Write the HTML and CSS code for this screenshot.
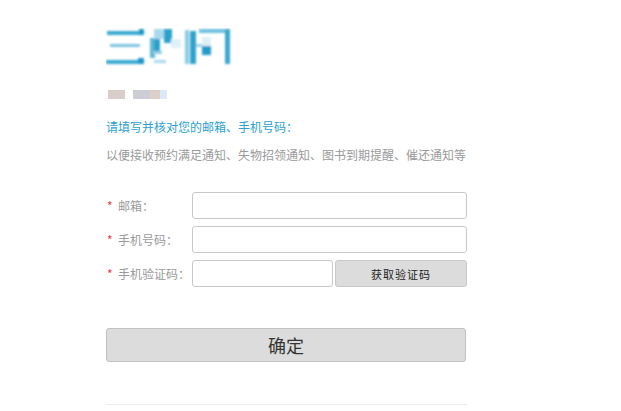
FILE: index.html
```html
<!DOCTYPE html>
<html lang="zh-CN">
<head>
	<meta charset="UTF-8">
<link rel="stylesheet" href="styles.css">
</head>
<body>
<div class="page">
	<div class="logo">
		<svg width="130" height="40" viewBox="0 0 130 40">
			<defs><filter id="bl"><feGaussianBlur stdDeviation="1"/></filter></defs>
			<g filter="url(#bl)">
				<rect x="1" y="3" width="36" height="4" fill="#39a9d0"/>
				<rect x="4" y="16" width="30" height="3" fill="#7cc6e0"/>
				<rect x="0" y="32" width="38" height="4" fill="#39a9d0"/>
				<rect x="33" y="1" width="5" height="6" fill="#1d96c4"/>
				<rect x="32" y="30" width="6" height="6" fill="#1d96c4"/>
				<rect x="44" y="10" width="5" height="20" fill="#5fb8d8"/>
				<rect x="48" y="1" width="10" height="10" fill="#a9d9ec"/>
				<rect x="58" y="1" width="8" height="14" fill="#2aa0cc"/>
				<rect x="48" y="11" width="6" height="12" fill="#2aa0cc"/>
				<rect x="65" y="11" width="10" height="9" fill="#dff1f8"/>
				<rect x="47" y="23" width="9" height="3" fill="#8fcde4"/>
				<rect x="48" y="32" width="12" height="3" fill="#a6d8ea"/>
				<rect x="79" y="2" width="4" height="34" fill="#86cbe3"/>
				<rect x="84" y="3" width="6" height="33" fill="#2ea3cd"/>
				<rect x="93" y="1" width="27" height="4" fill="#6fc0de"/>
				<rect x="96" y="9" width="9" height="9" fill="#dff1f8"/>
				<rect x="96" y="18" width="9" height="9" fill="#229bc9"/>
				<rect x="90" y="16" width="6" height="3" fill="#9bd3e8"/>
				<rect x="119" y="1" width="5" height="35" fill="#3aa7cf"/>
			</g>
		</svg>
	</div>
	<div class="sub">
		<span class="blk b1"></span><span class="blk b2"></span><span class="blk b3"></span><span class="blk b4"></span>
	</div>
	<p class="tip">请填写并核对您的邮箱、手机号码：</p>
	<p class="desc">以便接收预约满足通知、失物招领通知、图书到期提醒、催还通知等</p>

	<div class="form">
		<div class="row">
			<label class="lbl"><i>*</i>邮箱：</label>
			<input type="text" class="ipt">
		</div>
		<div class="row">
			<label class="lbl"><i>*</i>手机号码：</label>
			<input type="text" class="ipt">
		</div>
		<div class="row">
			<label class="lbl"><i>*</i>手机验证码：</label>
			<input type="text" class="ipt code">
			<input type="button" class="getcode" value="获取验证码">
		</div>
	</div>

	<input type="button" class="ok" value="确定">
	<div class="line"></div>
</div>
</body>
</html>
```

FILE: styles.css
```css
*{ margin:0; padding:0; list-style:none; font-family:"Noto Sans CJK SC","DejaVu Sans",sans-serif;}
body{ background:#fff;}
.page{ width:361px; padding:28px 0 0 106px;}
.logo{ height:40px;}
.logo svg{ display:block;}
.sub{ margin-top:22px; height:9px; display:flex;}
.blk{ display:block; height:9px;}
.b1{ width:17px; background:#d9cdc9; margin-left:2px; margin-right:8px;}
.b2{ width:17px; background:#cdcdd5;}
.b3{ width:10px; background:#ddd0c8;}
.b4{ width:7px; background:#dbe9f8;}
.tip{ margin-top:18px; font-size:12px; line-height:20px; color:#2c9fd0;}
.desc{ margin-top:8px; font-size:12px; line-height:20px; color:#9a9a9a; white-space:nowrap;}
.form{ margin-top:27px; display:flex; flex-direction:column; gap:7px;}
.row{ display:flex; align-items:center; height:27px;}
.lbl{ width:86px; font-size:12px; color:#9a9a9a; display:flex; align-items:center;}
.lbl i{ font-style:normal; color:#ee3a3d; font-size:12px; width:11px; padding-left:1px;}
.ipt{ width:275px; height:27px; box-sizing:border-box; border:1px solid #c8c8c8; border-radius:3px; background:#fff; outline:none;}
.ipt.code{ width:141px;}
.getcode{ width:132px; height:27px; margin-left:2px; box-sizing:border-box; border:1px solid #c8c8c8; border-radius:3px; background:#dcdcdc; font-size:11px; letter-spacing:1px; color:#222;}
.ok{ display:block; margin-top:41px; width:360px; height:34px; box-sizing:border-box; border:1px solid #c2c2c2; border-radius:3px; background:#dcdcdc; font-size:18px; color:#333;}
.line{ margin-top:42px; width:361px; height:1px; background:#ececec;}
```
